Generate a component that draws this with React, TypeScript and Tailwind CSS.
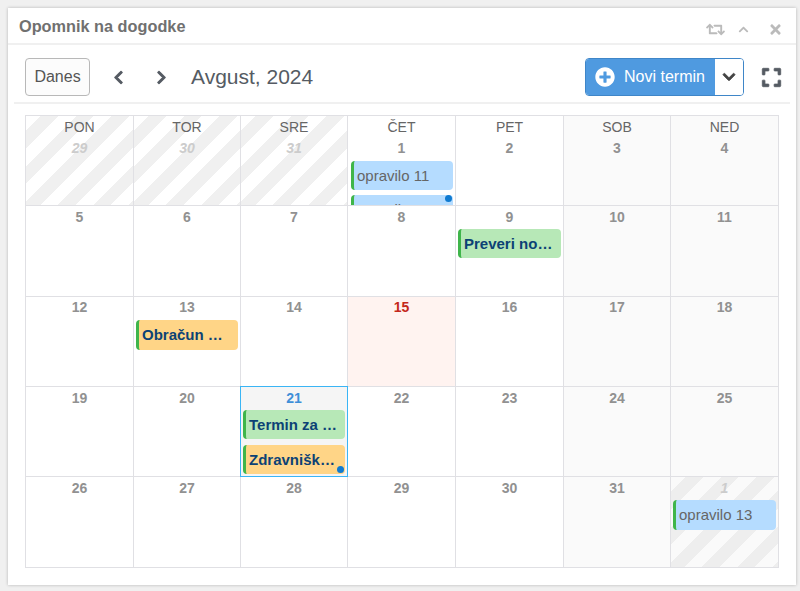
import { FaRetweet, FaChevronUp, FaChevronDown, FaChevronLeft, FaChevronRight, FaTimes, FaPlusCircle, FaExpand } from 'react-icons/fa'

type Ev = { title: string; color: 'blue' | 'green' | 'orange' }

type Day = {
  n: number
  other?: boolean
  weekend?: boolean
  today?: boolean
  selected?: boolean
  dot?: boolean
  events?: Ev[]
}

const heads = ['PON', 'TOR', 'SRE', 'ČET', 'PET', 'SOB', 'NED']
const colWidths = ['w-[108px]', 'w-[107px]', 'w-[107px]', 'w-[108px]', 'w-[108px]', 'w-[107px]', 'w-[108px]']

const weeks: Day[][] = [
  [
    { n: 29, other: true },
    { n: 30, other: true },
    { n: 31, other: true },
    { n: 1, dot: true, events: [{ title: 'opravilo 11', color: 'blue' }, { title: 'opravilo 11', color: 'blue' }] },
    { n: 2 },
    { n: 3, weekend: true },
    { n: 4, weekend: true },
  ],
  [
    { n: 5 },
    { n: 6 },
    { n: 7 },
    { n: 8 },
    { n: 9, events: [{ title: 'Preveri novo pošto', color: 'green' }] },
    { n: 10, weekend: true },
    { n: 11, weekend: true },
  ],
  [
    { n: 12 },
    { n: 13, events: [{ title: 'Obračun DDV za julij', color: 'orange' }] },
    { n: 14 },
    { n: 15, today: true },
    { n: 16 },
    { n: 17, weekend: true },
    { n: 18, weekend: true },
  ],
  [
    { n: 19 },
    { n: 20 },
    {
      n: 21,
      selected: true,
      dot: true,
      events: [
        { title: 'Termin za sestanek', color: 'green' },
        { title: 'Zdravniški pregled', color: 'orange' },
      ],
    },
    { n: 22 },
    { n: 23 },
    { n: 24, weekend: true },
    { n: 25, weekend: true },
  ],
  [
    { n: 26 },
    { n: 27 },
    { n: 28 },
    { n: 29 },
    { n: 30 },
    { n: 31, weekend: true },
    { n: 1, other: true, weekend: true, events: [{ title: 'opravilo 13', color: 'blue' }] },
  ],
]

const evColors = {
  blue: 'bg-[#b5dcff] text-[#666666] font-normal',
  green: 'bg-[#b7e8b7] text-[#0c4275] font-bold',
  orange: 'bg-[#ffd587] text-[#0c4275] font-bold',
}

const stripes =
  'bg-[repeating-linear-gradient(135deg,#ffffff_0px,#ffffff_10.5px,#f0f0f0_10.5px,#f0f0f0_23px,#ffffff_23px,#ffffff_25px)]'
const stripesWeekend =
  'bg-[repeating-linear-gradient(135deg,#fafafa_0px,#fafafa_10.5px,#eeeeee_10.5px,#eeeeee_23px,#fafafa_23px,#fafafa_25px)]'

function Cell({ day, head, week, col }: { day: Day; head?: string; week: number; col: number }) {
  let bg = 'bg-white'
  if (day.weekend) bg = 'bg-[#fafafa]'
  if (day.today) bg = 'bg-[#fff3f0]'
  if (day.selected) bg = 'bg-[#f5f5f5]'
  if (day.other) bg = day.weekend ? stripesWeekend : stripes

  let numColor = 'text-[#919191]'
  if (day.other) numColor = 'text-[#cccccc] italic'
  if (day.today) numColor = 'text-[#c4281b]'
  if (day.selected) numColor = 'text-[#3f8fd8]'

  const tall = week === 1 || week === 4
  const evHeight = week === 2 || week === 4 ? 'h-[30px]' : 'h-[29px]'

  return (
    <div
      className={`relative overflow-hidden ${
        day.selected
          ? '-mt-px -ml-px h-[91px] w-[108px] border border-[#3ab5f5]'
          : `border-r border-b border-[#e0e0e4] ${colWidths[col]} ${tall ? 'h-[91px]' : 'h-[90px]'}`
      } ${bg}`}
    >
      {head && <div className="h-[21px] pt-[2px] text-center text-[14px] leading-[18px] text-[#666666]">{head}</div>}
      <div className={`text-center text-[14px] font-bold ${head ? 'h-[24px]' : 'h-[23px]'} ${week === 2 ? 'leading-[20px]' : 'leading-[22px]'} ${numColor}`}>
        {day.n}
      </div>
      <div className={`flex flex-col pr-[2px] ${day.selected ? 'gap-[6px]' : 'gap-[5px]'} ${col === 3 ? 'pl-[3px]' : 'pl-[2px]'}`}>
        {day.events?.map((ev, i) => (
          <div
            key={i}
            className={`${evHeight} shrink-0 truncate rounded-[4px] border-l-[3px] border-[#3fb54a] pl-[3px] pr-[6px] text-[15px] leading-[29px] ${evColors[ev.color]}`}
          >
            {ev.title}
          </div>
        ))}
      </div>
      {day.dot && <div className="absolute right-[3px] bottom-[3px] h-[7px] w-[7px] rounded-full bg-[#0f7ad0]" />}
    </div>
  )
}

export default function App() {
  return (
    <div className="h-[591px] w-[800px] overflow-hidden bg-[#f0f0f0] pt-2 pl-2 font-['Liberation_Sans',Arial,sans-serif]">
      <div className="h-[577px] w-[788px] bg-white shadow-[0_0_3px_rgba(0,0,0,0.25)]">
        <div className="flex h-[37px] items-center justify-between border-b-2 border-[#f0f0f0] pr-[13px] pl-[11px]">
          <h1 className="pt-[2px] text-[16.3px] font-bold text-[#707070]">Opomnik na dogodke</h1>
          <div className="flex items-center pt-[7px] text-[#bbbbbb]">
            <FaRetweet size={19} />
            <FaChevronUp size={11} className="ml-[13px]" />
            <FaTimes size={15} className="ml-[19px]" />
          </div>
        </div>

        <div className="mx-[6px] flex h-[59px] items-center justify-between border-b-2 border-[#f0f0f0] pt-[7px] pr-[8px] pl-[11px]">
          <div className="flex items-center">
            <button className="h-[38px] w-[65px] rounded-[4px] border border-[#b8b8b8] bg-[#fcfcfc] text-[16px] text-[#555555]">
              Danes
            </button>
            <FaChevronLeft size={15} stroke="currentColor" strokeWidth={30} className="ml-[21px] text-[#555b63]" />
            <FaChevronRight size={15} stroke="currentColor" strokeWidth={30} className="ml-[28px] text-[#555b63]" />
            <span className="ml-[22px] text-[21px] text-[#555b63]">Avgust, 2024</span>
          </div>
          <div className="flex items-center">
            <div className="flex h-[38px] w-[159px] overflow-hidden rounded-[4px] border border-[#3f86c8]">
              <button className="flex w-[129px] items-center bg-[#4f9ae0] pl-[9px] text-[16px] text-white">
                <FaPlusCircle size={20} />
                <span className="ml-[9px]">Novi termin</span>
              </button>
              <button className="flex flex-1 items-center justify-center bg-white text-[#444444]">
                <FaChevronDown size={14} stroke="currentColor" strokeWidth={30} />
              </button>
            </div>
            <FaExpand size={21} stroke="currentColor" strokeWidth={20} className="ml-[17px] text-[#555b63]" />
          </div>
        </div>

        <div className="mt-[11px] ml-[17px] w-[754px] border-t border-l border-[#e0e0e4]">
          {weeks.map((week, w) => (
            <div key={w} className="flex">
              {week.map((day, d) => (
                <Cell key={d} day={day} week={w} col={d} head={w === 0 ? heads[d] : undefined} />
              ))}
            </div>
          ))}
        </div>
      </div>
    </div>
  )
}
